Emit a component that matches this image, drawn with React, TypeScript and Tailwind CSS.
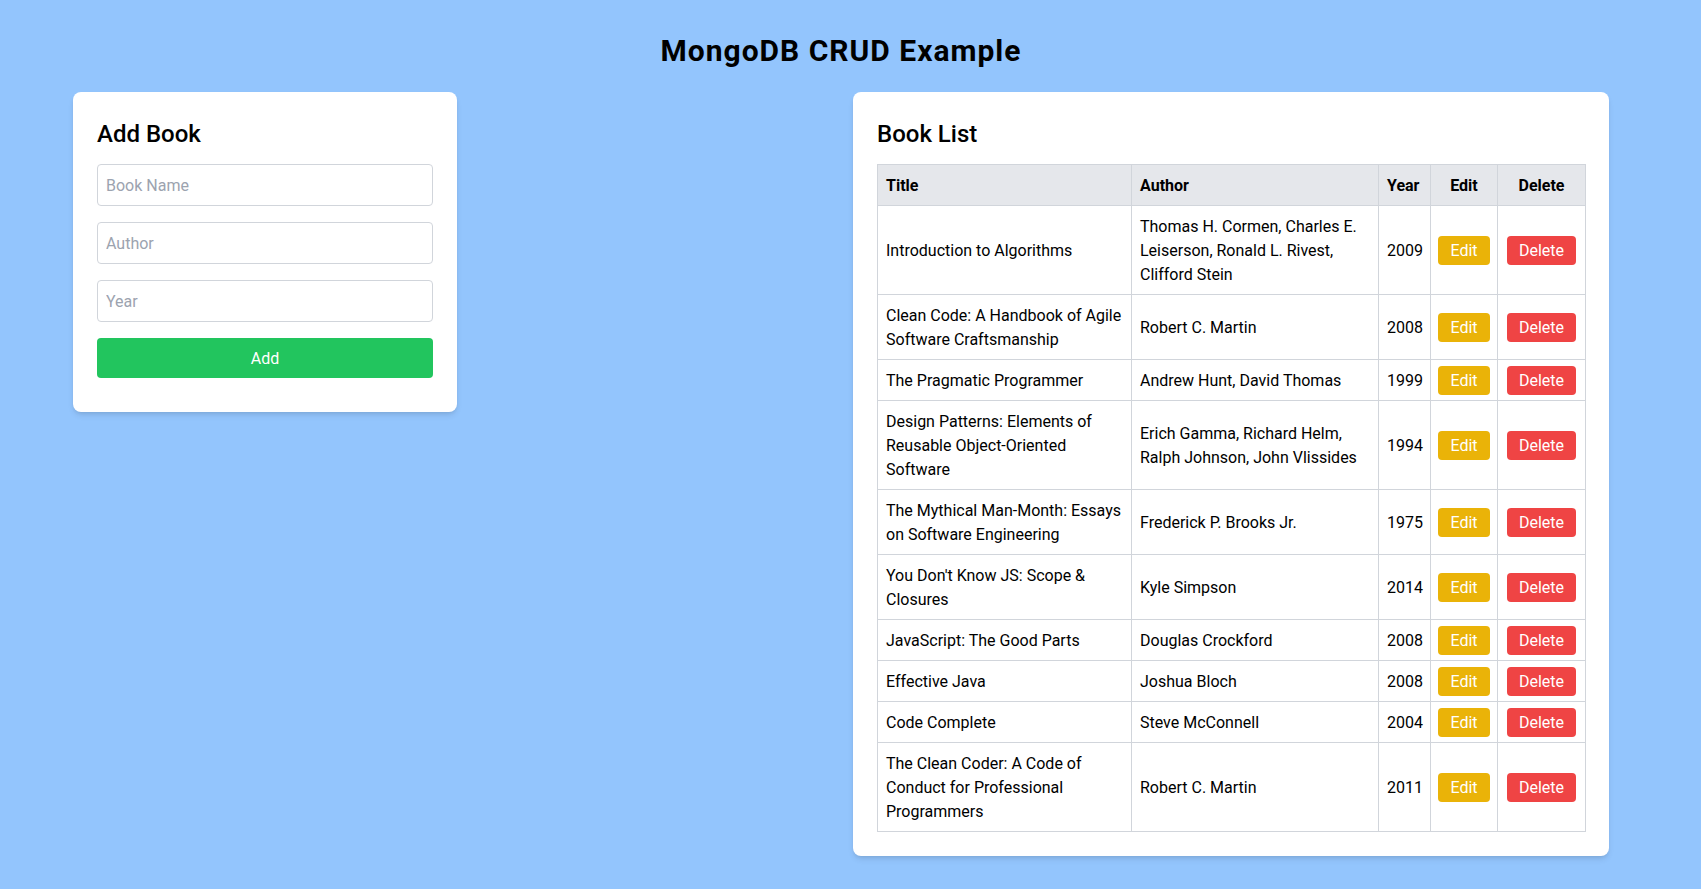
import React from "react";

type Book = { title: string[]; author: string[]; year: string };

const books: Book[] = [
  {
    title: ["Introduction to Algorithms"],
    author: ["Thomas H. Cormen, Charles E.", "Leiserson, Ronald L. Rivest,", "Clifford Stein"],
    year: "2009",
  },
  {
    title: ["Clean Code: A Handbook of Agile", "Software Craftsmanship"],
    author: ["Robert C. Martin"],
    year: "2008",
  },
  { title: ["The Pragmatic Programmer"], author: ["Andrew Hunt, David Thomas"], year: "1999" },
  {
    title: ["Design Patterns: Elements of", "Reusable Object-Oriented", "Software"],
    author: ["Erich Gamma, Richard Helm,", "Ralph Johnson, John Vlissides"],
    year: "1994",
  },
  {
    title: ["The Mythical Man-Month: Essays", "on Software Engineering"],
    author: ["Frederick P. Brooks Jr."],
    year: "1975",
  },
  { title: ["You Don't Know JS: Scope &", "Closures"], author: ["Kyle Simpson"], year: "2014" },
  { title: ["JavaScript: The Good Parts"], author: ["Douglas Crockford"], year: "2008" },
  { title: ["Effective Java"], author: ["Joshua Bloch"], year: "2008" },
  { title: ["Code Complete"], author: ["Steve McConnell"], year: "2004" },
  {
    title: ["The Clean Coder: A Code of", "Conduct for Professional", "Programmers"],
    author: ["Robert C. Martin"],
    year: "2011",
  },
];

function Lines({ lines }: { lines: string[] }) {
  return (
    <>
      {lines.map((l, i) => (
        <span key={i} className="block whitespace-nowrap">
          {l}
        </span>
      ))}
    </>
  );
}

const cell = "border border-[#d1d5db] px-2 pt-[9px] pb-[7px] align-middle";
const btnCell = "border border-[#d1d5db] px-2 py-2 align-middle";
const inputCls =
  "block w-full border border-[#d1d5db] rounded px-2 pt-[9px] pb-[7px] mb-4 text-base leading-6 placeholder-[#9ca3af] outline-none";

export default function App() {
  return (
    <div
      className="min-h-screen bg-[#93c5fd] pt-[33px] text-black"
      style={{ fontFamily: '"Segoe UI", Roboto, "Noto Sans", sans-serif' }}
    >
      <div className="ml-[73px] w-[1536px]">
        <h1 className="text-3xl leading-9 font-bold tracking-[1px] text-center mb-[23px]">
          MongoDB CRUD Example
        </h1>
        <div className="grid grid-cols-2 gap-6 items-start">
          <div className="w-96 bg-white rounded-lg shadow-md px-6 pt-[26px] pb-[34px]">
            <h2 className="text-2xl leading-8 font-medium mb-[14px]">Add Book</h2>
            <input type="text" placeholder="Book Name" className={inputCls} />
            <input type="text" placeholder="Author" className={inputCls} />
            <input type="text" placeholder="Year" className={inputCls} />
            <button className="block w-full bg-[#22c55e] text-white rounded pt-[9px] pb-[7px] text-base leading-6">
              Add
            </button>
          </div>

          <div className="bg-white rounded-lg shadow-md px-6 pb-6 pt-[26px]">
            <h2 className="text-2xl leading-8 font-medium mb-[14px]">Book List</h2>
            <table className="w-full table-fixed border-collapse border border-[#d1d5db] text-base leading-6">
              <colgroup>
                <col className="w-[254px]" />
                <col className="w-[247px]" />
                <col className="w-[52px]" />
                <col className="w-[67px]" />
                <col className="w-[88px]" />
              </colgroup>
              <thead>
                <tr className="bg-[#e5e7eb]">
                  <th className={`${cell} text-left font-bold`}>Title</th>
                  <th className={`${cell} text-left font-bold`}>Author</th>
                  <th className={`${cell} text-left font-bold`}>Year</th>
                  <th className={`${cell} text-center font-bold`}>Edit</th>
                  <th className={`${cell} text-center font-bold`}>Delete</th>
                </tr>
              </thead>
              <tbody>
                {books.map((b, i) => (
                  <tr key={i}>
                    <td className={cell}>
                      <Lines lines={b.title} />
                    </td>
                    <td className={cell}>
                      <Lines lines={b.author} />
                    </td>
                    <td className={cell}>{b.year}</td>
                    <td className={btnCell}>
                      <div className="flex h-6 items-center justify-center">
                        <button className="shrink-0 h-[29px] px-3 pt-px rounded bg-[#eab308] text-white text-base leading-6">
                          Edit
                        </button>
                      </div>
                    </td>
                    <td className={btnCell}>
                      <div className="flex h-6 items-center justify-center">
                        <button className="shrink-0 h-[29px] px-3 pt-px rounded bg-[#ef4444] text-white text-base leading-6">
                          Delete
                        </button>
                      </div>
                    </td>
                  </tr>
                ))}
              </tbody>
            </table>
          </div>
        </div>
      </div>
    </div>
  );
}
